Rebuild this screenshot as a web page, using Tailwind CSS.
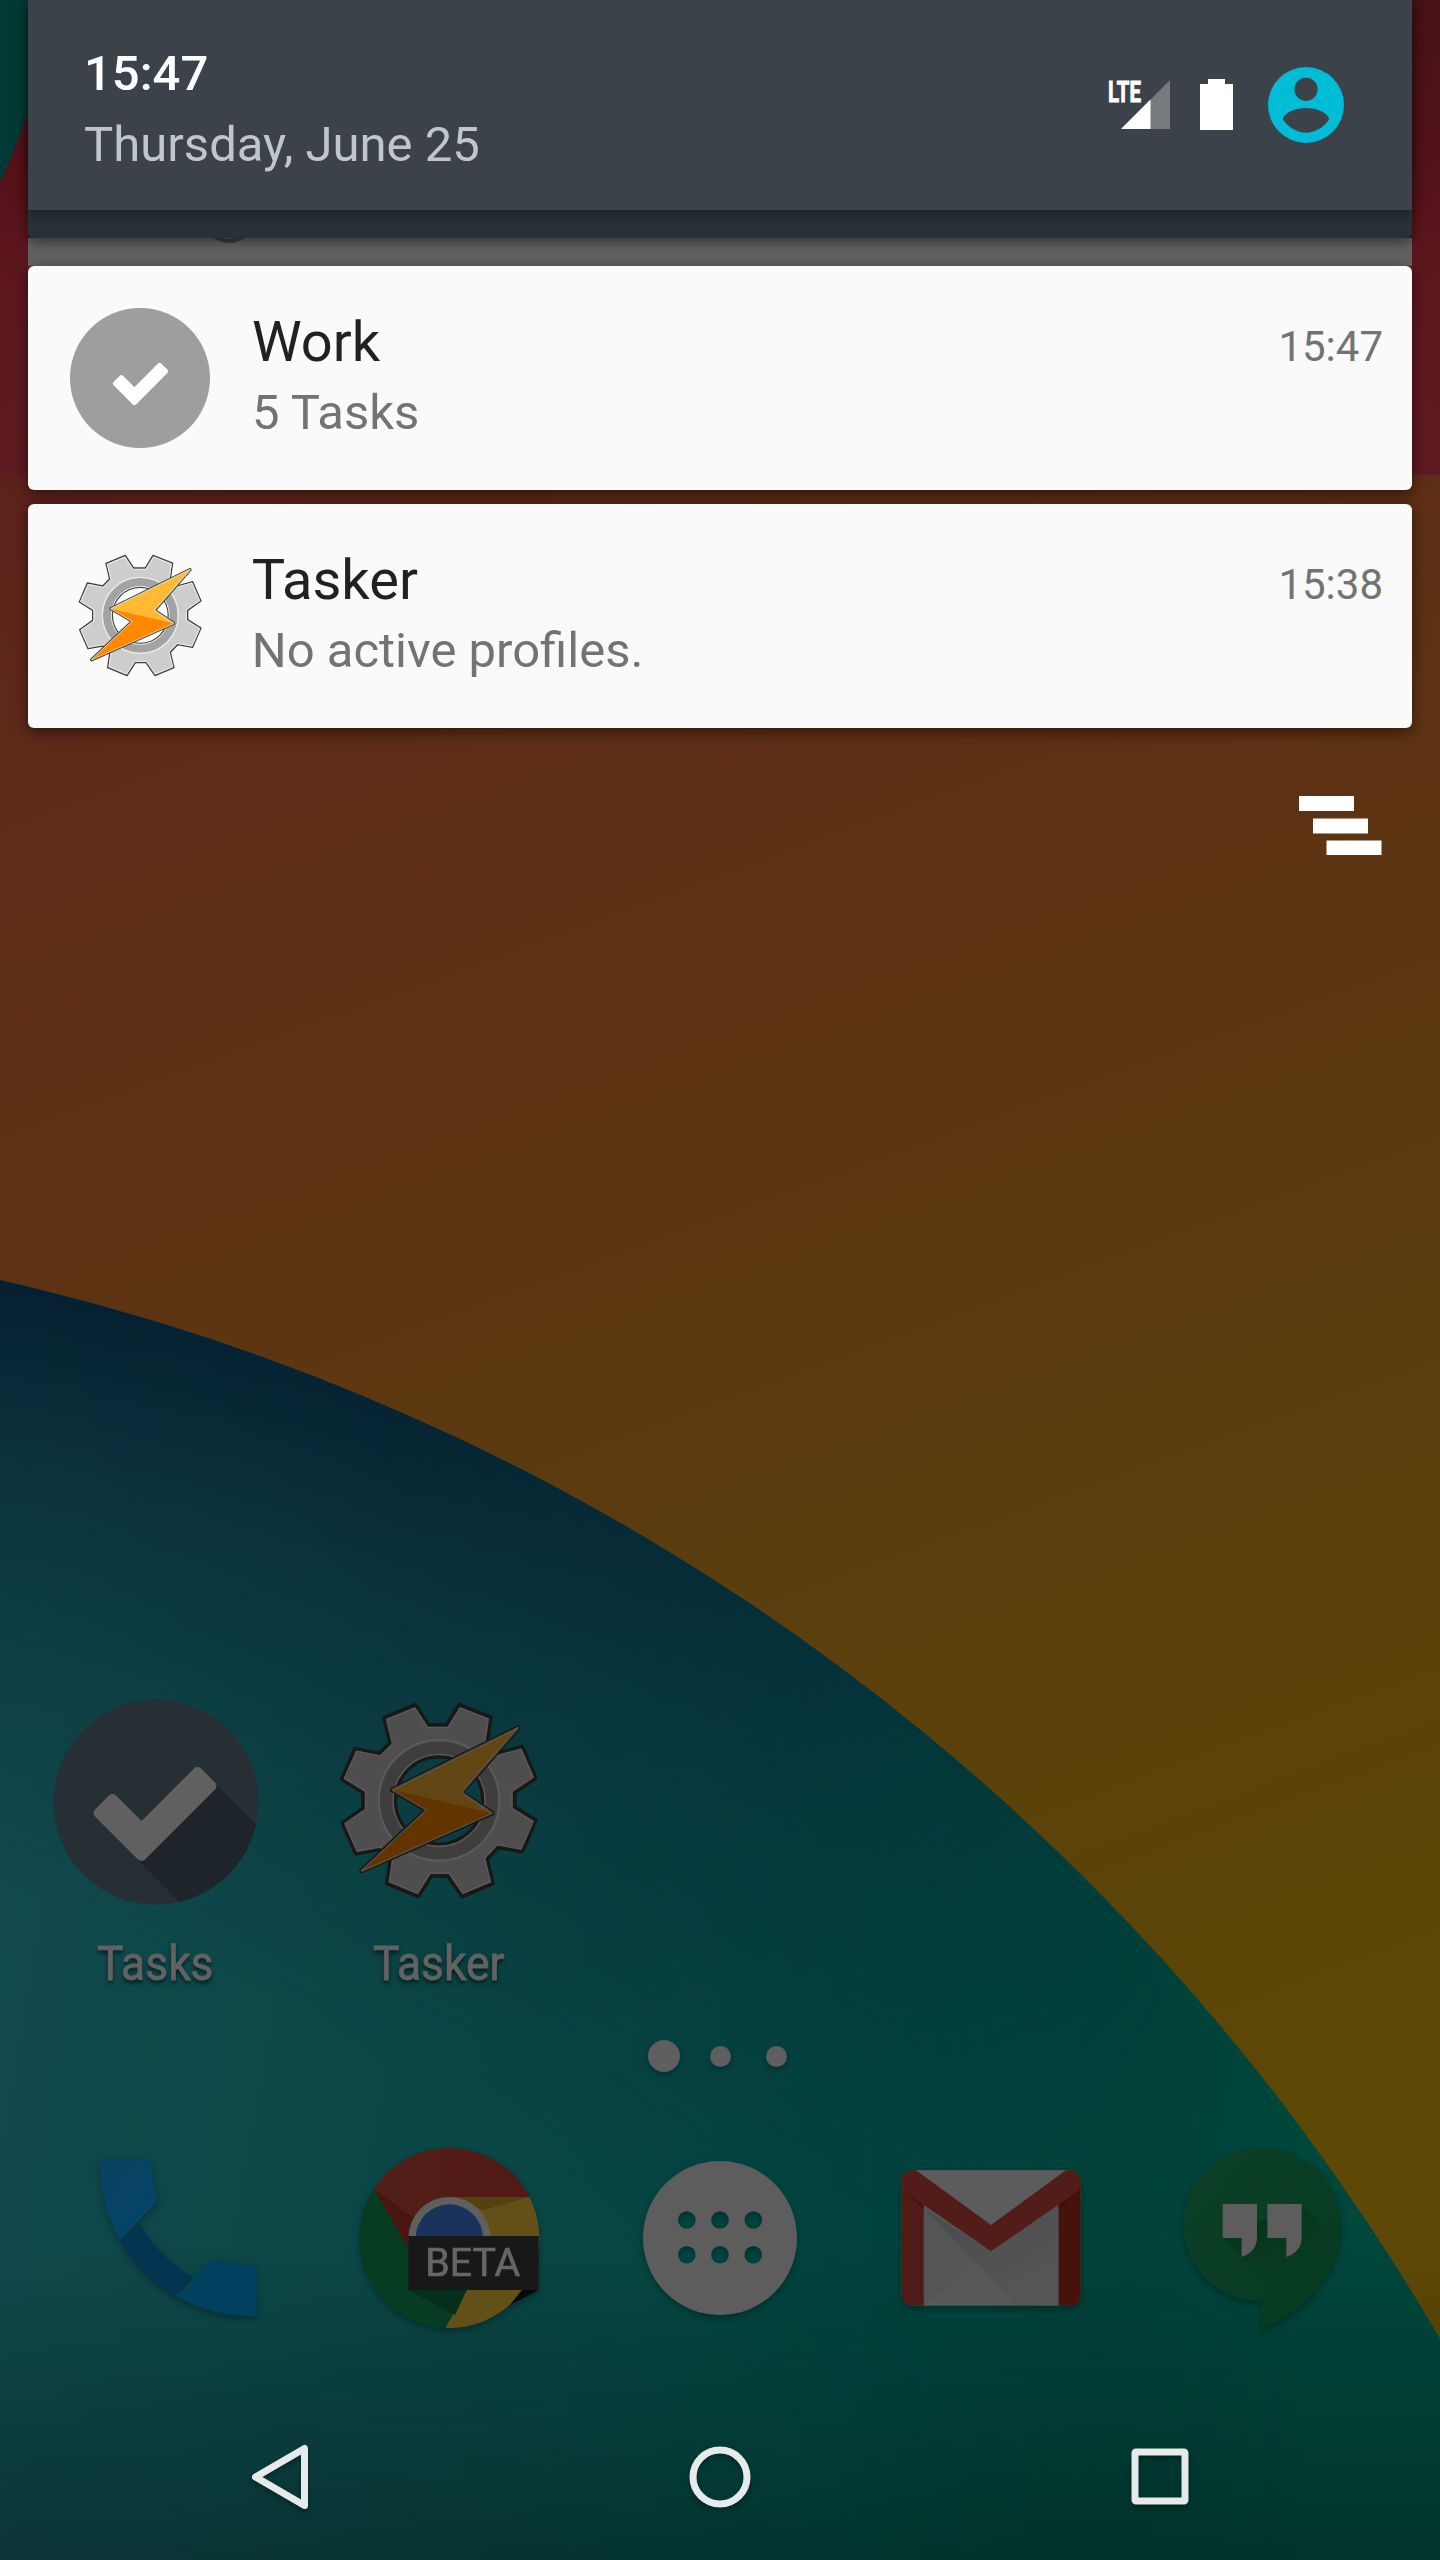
<!DOCTYPE html>
<html lang="en">
<head>
<meta charset="utf-8">
<title>Notification shade</title>
<script src="https://cdn.jsdelivr.net/npm/@tailwindcss/browser@4"></script>
</head>
<body class="bg-black">
<svg class="hidden">
  <symbol id="tasker" viewBox="110 155 385 380">
    <path fill="#cdcdcd" fill-rule="evenodd" stroke="#3f3f3f" stroke-linejoin="round" d="M200 189L258 165L283 203H318L341 165L400 188L393 236L413 257L460 244L485 302L445 330V358L485 383L460 441L415 433L393 456L404 502L347 526L320 487H288L263 526L205 502L211 460L190 437L146 445L121 388L160 360V330L120 305L144 248L190 257L211 236ZM303 261A84 84 0 1 0 303 429A84 84 0 1 0 303 261Z"/>
    <g fill="none">
      <circle cx="303" cy="345" r="100" stroke="#a3a3a3" stroke-width="25"/>
      <circle cx="303" cy="345" r="114" stroke="#ececec" stroke-width="4"/>
      <circle cx="303" cy="345" r="87" stroke="#e4e4e4" stroke-width="3"/>
      <path stroke="#ececec" stroke-width="3" stroke-linejoin="round" d="M204 192L257 170L281 207H320L343 170L396 191L389 238L411 261L458 248L481 301L441 328V360L481 385L458 437L413 429L389 454L400 499L348 521L322 483H286L262 521L209 499L215 458L192 433L148 441L125 389L164 362V328L124 303L147 252L192 261L215 238Z"/>
    </g>
    <path fill="none" stroke="#3f3f3f" stroke-linejoin="round" class="[stroke-width:10]" d="M215 325L452 208L345 330L403 369L157 478L280 363Z"/>
    <path fill="#ffb932" stroke="#e8cf9d" stroke-width="4" stroke-linejoin="round" d="M215 325L452 208L345 330L403 369L157 478L280 363Z"/>
    <path fill="#ff8800" d="M217 326L402 369L160 476L281 363Z"/>
  </symbol>
  <symbol id="check" viewBox="92 1765 127 98">
    <path fill="currentColor" stroke="currentColor" stroke-width="10" stroke-linejoin="round" d="M113 1799L142 1828L198 1772L212 1786L142 1856L99 1813Z"/>
  </symbol>
</svg>

<main class="relative flex h-[2560px] w-[1440px] flex-col overflow-hidden font-['Roboto',sans-serif]">
  <!-- Wallpaper -->
  <svg class="absolute inset-0" width="1440" height="2560" viewBox="0 0 1440 2560">
    <defs>
      <linearGradient id="warm" gradientUnits="userSpaceOnUse" x1="0" y1="480" x2="700" y2="2400">
        <stop offset="0" stop-color="#5d211c"/><stop offset=".15" stop-color="#5e2b18"/><stop offset=".42" stop-color="#5d3512"/><stop offset=".66" stop-color="#5b3f0d"/><stop offset=".87" stop-color="#5b4507"/><stop offset="1" stop-color="#5d4905"/>
      </linearGradient>
      <linearGradient id="red" x1="0" y1="0" x2="0" y2="1">
        <stop offset="0" stop-color="#461217"/><stop offset=".35" stop-color="#531119"/><stop offset=".6" stop-color="#5d171f"/><stop offset="1" stop-color="#5e1b21"/>
      </linearGradient>
      <linearGradient id="sea" gradientUnits="userSpaceOnUse" x1="0" y1="1900" x2="1150" y2="2100">
        <stop offset="0" stop-color="#11494c"/><stop offset=".45" stop-color="#0a4645"/><stop offset=".85" stop-color="#00483f"/><stop offset="1" stop-color="#00473c"/>
      </linearGradient>
      <radialGradient id="rim" gradientUnits="userSpaceOnUse" cx="-498" cy="3466" r="2242">
        <stop offset=".74" stop-color="#041a2c" stop-opacity="0"/><stop offset=".85" stop-color="#061d30" stop-opacity=".25"/><stop offset=".93" stop-color="#061d30" stop-opacity=".56"/><stop offset="1" stop-color="#061e30" stop-opacity=".96"/>
      </radialGradient>
      <linearGradient id="fade" gradientUnits="userSpaceOnUse" x1="0" y1="0" x2="1300" y2="0">
        <stop offset="0" stop-color="#fff"/><stop offset=".3" stop-color="#e4e4e4"/><stop offset=".6" stop-color="#999"/><stop offset="1" stop-color="#000"/>
      </linearGradient>
      <linearGradient id="foot" x1="0" y1="0" x2="0" y2="1">
        <stop offset="0" stop-color="#000" stop-opacity="0"/><stop offset="1" stop-color="#000" stop-opacity=".28"/>
      </linearGradient>
      <mask id="fademask"><rect width="1440" height="2560" fill="url(#fade)"/></mask>
    </defs>
    <rect width="1440" height="2560" fill="url(#warm)"/>
    <rect width="1440" height="475" fill="url(#red)"/>
    <path d="M0 0H62Q45 60 28 113Q15 150 0 182Z" fill="#003a34"/>
    <circle cx="-498" cy="3466" r="2242" fill="url(#sea)"/>
    <circle cx="-498" cy="3466" r="2242" fill="url(#rim)" mask="url(#fademask)"/>
    <rect y="2240" width="1440" height="320" fill="url(#foot)"/>
  </svg>

  <!-- Shade -->
  <header class="relative z-20 mx-7 h-[238px] rounded-b-md bg-[#263238] shadow-[0_4px_12px_rgba(0,0,0,.45)]">
    <div class="flex h-[210px] justify-between bg-[#3b4249] pr-[68px] pl-[56px] shadow-[0_3px_12px_rgba(0,0,0,.35)]">
      <div class="flex flex-col gap-[13px] pt-[45px] text-[49px] leading-[58px]">
        <div class="font-medium text-white">15:47</div>
        <div class="text-[#c3c6c8]">Thursday, June 25</div>
      </div>
      <svg class="mt-[60px]" width="240" height="90" viewBox="1104 60 240 90">
        <text x="1108" y="102" font-size="29" font-weight="700" fill="#fff" stroke="#fff" stroke-width=".9" textLength="33" lengthAdjust="spacingAndGlyphs">LTE</text>
        <path d="M1121 129L1170 80V129Z" fill="#747a7e"/>
        <path d="M1121 129L1150.500 99.500V129Z" fill="#fff"/>
        <path d="M1200 84H1208V79H1225V84H1233V130H1200Z" fill="#fff"/>
        <circle cx="1306" cy="105" r="38" fill="#00bcd7"/>
        <circle cx="1306" cy="89.300" r="11.600" fill="#3b4249"/>
        <path d="M1282.700 119C1286 111.500 1296 108 1306 108S1326 111.500 1329.300 119C1324 127.500 1315 132.700 1306 132.700S1288 127.500 1282.700 119Z" fill="#3b4249"/>
      </svg>
    </div>
  </header>
  <div class="relative z-0 mx-7 h-7 bg-[#616161]">
    <svg width="300" height="8" viewBox="28 238 300 8"><path d="M214 236Q229 246 244 236" fill="none" stroke="#3c3c3c" stroke-width="4"/></svg>
  </div>
  <section class="relative z-10 mx-7 flex flex-col gap-3.5">
    <article class="flex h-56 rounded-md bg-[#fafafa] pr-[29px] shadow-[0_4px_14px_rgba(0,0,0,.5)]">
      <div class="mt-[42px] ml-[42px] flex size-[140px] items-center justify-center rounded-full bg-[#9e9e9e] pt-[11px] text-white"><svg width="57" height="44"><use href="#check"/></svg></div>
      <div class="ml-[42px] flex grow flex-col gap-[9px] pt-[43px]">
        <h2 class="text-[56px] leading-[66px] text-[#212121]">Work</h2>
        <p class="text-[49px] leading-[58px] text-[#737373]">5 Tasks</p>
      </div>
      <time class="pt-[56px] text-[42px] leading-[50px] text-[#737373]">15:47</time>
    </article>
    <article class="flex h-56 rounded-md bg-[#fafafa] pr-[29px] shadow-[0_4px_14px_rgba(0,0,0,.5)]">
      <svg class="mt-[47.700px] mr-[7.700px] ml-[47.700px]" width="128.300" height="126.700" stroke-width="4"><use href="#tasker"/></svg>
      <div class="ml-[40px] flex grow flex-col gap-[9px] pt-[43px]">
        <h2 class="text-[56px] leading-[66px] text-[#212121]">Tasker</h2>
        <p class="text-[49px] leading-[58px] text-[#737373]">No active profiles.</p>
      </div>
      <time class="pt-[56px] text-[42px] leading-[50px] text-[#737373]">15:38</time>
    </article>
  </section>
  <div class="relative mt-[68px] flex justify-end pr-[58px]">
    <svg width="83" height="60" viewBox="1299 796 83 60" fill="#fff"><path d="M1299 796h55v15h-55zM1313 818.500h55v15h-55zM1326.500 840.500h55v14.500h-55z"/></svg>
  </div>

  <!-- Home screen -->
  <section class="relative mt-[841px] flex h-[309px] pl-[14px] text-[49px] leading-[58px] text-[#626262]">
    <div class="flex w-[283px] flex-col items-center">
      <svg width="210" height="210" viewBox="51.500 1697 210 210">
        <clipPath id="disc"><circle cx="156.500" cy="1802" r="102.500"/></clipPath>
        <circle cx="156.500" cy="1802" r="102.500" fill="#262f34"/>
        <path clip-path="url(#disc)" fill="#1d242a" d="M139 1861L217 1785L297 1865V1960H238Z"/>
        <use href="#check" x="92" y="1765" width="127" height="98" color="#606060"/>
      </svg>
      <span class="mt-[28px] inline-block scale-x-[.905] [-webkit-text-stroke:.8px_#626262] [text-shadow:0_3px_5px_rgba(0,0,0,.7)]">Tasks</span>
    </div>
    <div class="flex w-[283px] flex-col items-center">
      <svg class="brightness-[.38]" width="210" height="210" viewBox="334.300 1696 210 210" stroke-width="9"><use href="#tasker" x="337.400" y="1699" width="203.400" height="200.800"/></svg>
      <span class="mt-[28px] inline-block scale-x-[.905] [-webkit-text-stroke:.8px_#626262] [text-shadow:0_3px_5px_rgba(0,0,0,.7)]">Tasker</span>
    </div>
  </section>
  <div class="relative mt-[34px] flex h-8 items-center justify-center gap-[35px] pr-[6px] *:rounded-full *:bg-[#5f5f5f] *:shadow-[0_2px_5px_rgba(0,0,0,.3)]">
    <i class="-mr-[5px] size-8"></i><i class="size-[21px]"></i><i class="size-[21px]"></i>
  </div>
  <nav class="relative mt-[68px] grid h-[200px] grid-cols-5 justify-items-center px-[42.500px] *:drop-shadow-[0_3px_3px_rgba(0,0,0,.3)]">
    <svg width="190" height="200" viewBox="83 2140 190 200"><g transform="translate(60 2120) scale(.33333)">
      <linearGradient id="ph1" x1="0" y1="0" x2="1" y2="1"><stop stop-color="#0a4260"/><stop offset="1" stop-color="#03446a"/></linearGradient>
      <path fill="#04344f" d="M181 362L240 312Q300 415 398 471L347 527Q243 468 181 362Z"/>
      <path fill="url(#ph1)" d="M119 132Q119 119 132 119H260Q273 119 274 132Q275 185 292 234Q294 243 286 251Q230 306 181 360Q120 255 119 132Z"/>
      <path fill="#01415f" d="M347 527L455 424Q464 415 475 419Q525 435 578 434Q590 436 590 449V575Q590 588 577 588Q455 590 347 527Z"/>
    </g></svg>
    <svg width="190" height="200" viewBox="354 2140 190 200"><g transform="translate(60 2120) scale(.33333)">
      <linearGradient id="rd" x1="0" x2="1"><stop stop-color="#53201a"/><stop offset="1" stop-color="#521914"/></linearGradient>
      <clipPath id="cc"><circle cx="1168" cy="354" r="270"/></clipPath>
      <g clip-path="url(#cc)">
        <rect x="890" y="80" width="560" height="560" fill="#063d22"/>
        <path fill="#635019" d="M1168 231H1450V640H1147L1275 416Z"/>
        <path fill="#54410f" d="M1168 231H1408L1270 270Z"/>
        <path fill="url(#rd)" d="M943 208L880 80H1450V231H1168L1062 415Z"/>
        <path fill="#4a1410" d="M943 208L1068 300L1045 385Z"/>
        <path fill="#042f1b" d="M1045 510H1220L1185 585Z"/>
      </g>
      <circle cx="1168" cy="354" r="123" fill="#5f5f5f"/><circle cx="1168" cy="354" r="101" fill="#1b325d"/>
      <path fill="#080808" d="M1386 510H1436L1350 555Z"/>
      <rect x="1045" y="348" width="391" height="162" fill="#181818"/>
      <text x="1096" y="467" font-size="114" fill="#666" stroke="#666" stroke-width="2" textLength="284" lengthAdjust="spacingAndGlyphs">BETA</text>
    </g></svg>
    <svg width="190" height="200" viewBox="625 2140 190 200">
      <path fill="#5d5d5d" fill-rule="evenodd" d="M643 2238a77 77 0 1 0 154 0a77 77 0 1 0 -154 0ZM678 2220a8.800 8.800 0 1 0 17.600 0a8.800 8.800 0 1 0 -17.600 0ZM711.200 2220a8.800 8.800 0 1 0 17.600 0a8.800 8.800 0 1 0 -17.600 0ZM744.500 2220a8.800 8.800 0 1 0 17.600 0a8.800 8.800 0 1 0 -17.600 0ZM678 2254.700a8.800 8.800 0 1 0 17.600 0a8.800 8.800 0 1 0 -17.600 0ZM711.200 2254.700a8.800 8.800 0 1 0 17.600 0a8.800 8.800 0 1 0 -17.600 0ZM744.500 2254.700a8.800 8.800 0 1 0 17.600 0a8.800 8.800 0 1 0 -17.600 0Z"/>
    </svg>
    <svg width="190" height="200" viewBox="896 2140 190 200"><g transform="translate(600 2020) scale(.33333)">
      <clipPath id="gm"><rect x="904" y="451" width="538" height="406" rx="34"/></clipPath>
      <linearGradient id="gs" x1="0" y1="0" x2=".6" y2=".9"><stop stop-color="#4a4a4a"/><stop offset="1" stop-color="#555"/></linearGradient>
      <g clip-path="url(#gm)">
        <rect x="904" y="451" width="538" height="406" fill="#555"/>
        <path fill="url(#gs)" d="M970 565L1250 857H1376V555L1173 694Z"/>
        <path fill="#585858" d="M970 857L1130 725L1250 857Z"/>
        <path fill="#5c5c5c" d="M940 445H1406L1173 620Z"/>
        <path fill="#501b17" d="M904 480H971V857H904Z"/><path fill="#47120c" d="M1376 480H1442V857H1376Z"/>
        <path fill="#461510" d="M912 512L971 552V568Z"/><path fill="#3e0f0a" d="M1436 512L1376 552V568Z"/>
        <path fill="#521c18" d="M904 451H948L1173 615L1398 451H1442V490Q1440 508 1425 520L1173 694L921 520Q904 508 904 490Z"/>
      </g>
    </g></svg>
    <svg width="190" height="200" viewBox="1167 2140 190 200"><g transform="translate(1100 2100) scale(.33333)">
      <linearGradient id="hg" x1="0" y1="0" x2="1" y2="1"><stop stop-color="#0d4027"/><stop offset="1" stop-color="#063a1f"/></linearGradient>
      <linearGradient id="hs" x1="0" y1="0" x2=".6" y2="1"><stop stop-color="#062a19"/><stop offset="1" stop-color="#063a1f" stop-opacity="0"/></linearGradient>
      <path fill="url(#hg)" d="M486 604A236 230 0 0 1 250 374A236 230 0 0 1 486 144A237 236 0 0 1 723 380C723 520 610 635 486 687Z"/>
      <path fill="url(#hs)" d="M368 413L425 470L530 575Q640 540 700 415L605 312Z"/>
      <path fill="#5d5d5d" d="M368 312H471V412Q471 455 425 471V414H368ZM502 312H605V412Q605 455 559 471V414H502Z"/>
    </g></svg>
  </nav>
  <footer class="relative mt-[85px] flex h-[103px] items-center justify-between pr-[248px] pl-[248px] *:drop-shadow-[0_3px_2px_rgba(0,0,0,.3)]">
    <svg width="64" height="74" viewBox="248 2439.500 64 74" fill="none" stroke="#e6eaea" stroke-width="7" stroke-linejoin="round"><path d="M304.500 2448V2505L255.500 2476.500Z"/></svg>
    <svg width="64" height="74" viewBox="688 2439.500 64 74" fill="none" stroke="#e6eaea" stroke-width="7"><circle cx="720" cy="2476.500" r="27"/></svg>
    <svg width="64" height="74" viewBox="1128.500 2439.500 64 74" fill="none" stroke="#e6eaea" stroke-width="7" stroke-linejoin="round"><rect x="1135.500" y="2451.500" width="50" height="49" rx="1"/></svg>
  </footer>
</main>
</body>
</html>
